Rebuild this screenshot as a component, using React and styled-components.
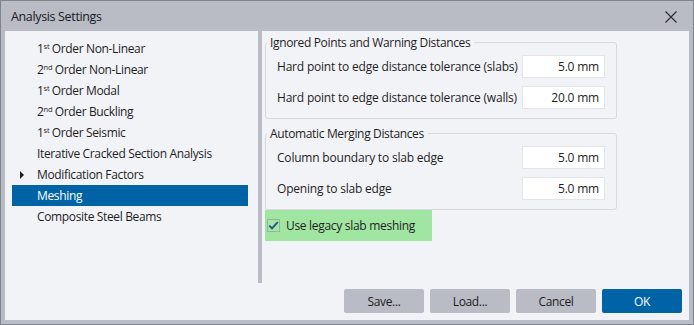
import React from 'react';
import styled, { createGlobalStyle } from 'styled-components';

const GlobalStyle = createGlobalStyle`
  html, body {
    margin: 0;
    padding: 0;
    background: #b9bbc5;
  }
  body {
    font-family: "Open Sans", "Noto Sans", sans-serif;
    font-size: 12px;
    color: #1e1e1e;
  }
`;

const Window = styled.div`
  width: 694px;
  height: 325px;
  box-sizing: border-box;
  border: 1px solid #80848f;
  background: #b9bbc5;
  display: flex;
  flex-direction: column;
  padding: 0 4px 4px 4px;
`;

const TitleBar = styled.div`
  height: 30px;
  display: flex;
  align-items: center;
  justify-content: space-between;
  padding: 0 4px 0 6px;
  font-size: 12.5px;
  letter-spacing: -0.35px;
  color: #1a1a1a;
`;

const CloseButton = styled.button`
  border: none;
  background: transparent;
  width: 28px;
  height: 28px;
  display: flex;
  align-items: center;
  justify-content: center;
  padding: 0;
  margin-top: 2px;
`;

const Client = styled.div`
  flex: 1;
  background: #f2f3f7;
  display: flex;
  flex-direction: column;
`;

const Main = styled.div`
  height: 252px;
  display: flex;
`;

const TreePane = styled.ul`
  width: 252px;
  box-sizing: border-box;
  margin: 0;
  padding: 7px 9px 0 7px;
  list-style: none;
`;

const TreeRow = styled.li`
  height: 21px;
  display: flex;
  align-items: center;
  padding-left: 8px;
  letter-spacing: -0.35px;
  background: ${(p) => (p.$selected ? '#0063a6' : 'transparent')};
  color: ${(p) => (p.$selected ? '#ffffff' : '#1e1e1e')};
`;

const Expander = styled.span`
  width: 17px;
  display: flex;
  align-items: center;
`;

const Arrow = styled.span`
  width: 0;
  height: 0;
  border-top: 4px solid transparent;
  border-bottom: 4px solid transparent;
  border-left: 4px solid #1e1e1e;
`;

const RowLabel = styled.span`
  white-space: nowrap;
`;

const Sup = styled.sup`
  font-size: 7.5px;
  vertical-align: 4px;
  line-height: 0;
  letter-spacing: 0;
  margin-right: 2px;
`;

const Splitter = styled.div`
  width: 4px;
  margin-left: 1px;
  background: #b9bbc5;
`;

const SettingsPane = styled.div`
  flex: 1;
  padding: 3px 0 0 3px;
  display: flex;
  flex-direction: column;
`;

const GroupBox = styled.fieldset`
  width: 352px;
  box-sizing: border-box;
  margin: 0;
  padding: 4px 11px 9px 10px;
  border: 1px solid #d7d9df;
  border-radius: 3px;
  display: flex;
  flex-direction: column;
  gap: 8px;
  & + & {
    margin-top: 6px;
  }
`;

const Legend = styled.legend`
  padding: 0 4px 0 3px;
  margin-left: -9px;
  letter-spacing: -0.35px;
  line-height: 17px;
`;

const FieldRow = styled.div`
  display: flex;
  align-items: center;
  justify-content: space-between;
  padding-left: 1px;
`;

const FieldLabel = styled.span`
  letter-spacing: -0.2px;
`;

const ValueBox = styled.div`
  width: 83px;
  height: 23px;
  box-sizing: border-box;
  background: #ffffff;
  border: 1px solid #e4e5ea;
  display: flex;
  align-items: center;
  justify-content: flex-end;
  padding-right: 5px;
  letter-spacing: -0.2px;
`;

const CheckRow = styled.label`
  width: 167px;
  height: 31px;
  box-sizing: border-box;
  background: #a0e6a2;
  display: flex;
  align-items: center;
  gap: 6px;
  padding-left: 2px;
  letter-spacing: -0.3px;
`;

const CheckBox = styled.span`
  width: 13px;
  height: 13px;
  box-sizing: border-box;
  border: 1px solid #8fb896;
  background: #a6e4a9;
  display: flex;
  align-items: center;
  justify-content: center;
`;

const Footer = styled.div`
  display: flex;
  justify-content: flex-end;
  gap: 6px;
  padding: 6px 7px 7px 0;
`;

const Button = styled.button`
  width: 80px;
  height: 24px;
  border: none;
  border-radius: 2px;
  font-family: inherit;
  font-size: 12px;
  letter-spacing: -0.35px;
  background: ${(p) => (p.$primary ? '#0063a6' : '#b9bbc5')};
  color: ${(p) => (p.$primary ? '#ffffff' : '#1e1e1e')};
`;

const treeItems = [
  { n: '1', sup: 'st', text: 'Order Non-Linear' },
  { n: '2', sup: 'nd', text: 'Order Non-Linear' },
  { n: '1', sup: 'st', text: 'Order Modal' },
  { n: '2', sup: 'nd', text: 'Order Buckling' },
  { n: '1', sup: 'st', text: 'Order Seismic' },
  { text: 'Iterative Cracked Section Analysis' },
  { text: 'Modification Factors', expandable: true },
  { text: 'Meshing', selected: true },
  { text: 'Composite Steel Beams' },
];

const groups = [
  {
    title: 'Ignored Points and Warning Distances',
    fields: [
      ['Hard point to edge distance tolerance (slabs)', '5.0 mm'],
      ['Hard point to edge distance tolerance (walls)', '20.0 mm'],
    ],
  },
  {
    title: 'Automatic Merging Distances',
    fields: [
      ['Column boundary to slab edge', '5.0 mm'],
      ['Opening to slab edge', '5.0 mm'],
    ],
  },
];

const App = () => (
  <>
    <GlobalStyle />
    <Window>
      <TitleBar>
        <span>Analysis Settings</span>
        <CloseButton aria-label="Close">
          <svg width="12" height="12" viewBox="0 0 12 12">
            <path d="M0.5 0.5 L11.5 11.5 M11.5 0.5 L0.5 11.5" stroke="#2a2a2a" strokeWidth="1.1" />
          </svg>
        </CloseButton>
      </TitleBar>
      <Client>
        <Main>
          <TreePane>
            {treeItems.map((item, i) => (
              <TreeRow key={i} $selected={item.selected}>
                <Expander>{item.expandable && <Arrow />}</Expander>
                <RowLabel>
                  {item.n && (
                    <>
                      {item.n}
                      <Sup>{item.sup}</Sup>
                    </>
                  )}
                  {item.text}
                </RowLabel>
              </TreeRow>
            ))}
          </TreePane>
          <Splitter />
          <SettingsPane>
            {groups.map((g) => (
              <GroupBox key={g.title}>
                <Legend>{g.title}</Legend>
                {g.fields.map(([label, value]) => (
                  <FieldRow key={label}>
                    <FieldLabel>{label}</FieldLabel>
                    <ValueBox>{value}</ValueBox>
                  </FieldRow>
                ))}
              </GroupBox>
            ))}
            <CheckRow>
              <CheckBox>
                <svg width="11" height="9" viewBox="0 0 11 9">
                  <path d="M1.2 4.6 L4 7.3 L9.8 1.2" fill="none" stroke="#1b5b78" strokeWidth="1.9" />
                </svg>
              </CheckBox>
              Use legacy slab meshing
            </CheckRow>
          </SettingsPane>
        </Main>
        <Footer>
          <Button>Save...</Button>
          <Button>Load...</Button>
          <Button>Cancel</Button>
          <Button $primary>OK</Button>
        </Footer>
      </Client>
    </Window>
  </>
);

export default App;
